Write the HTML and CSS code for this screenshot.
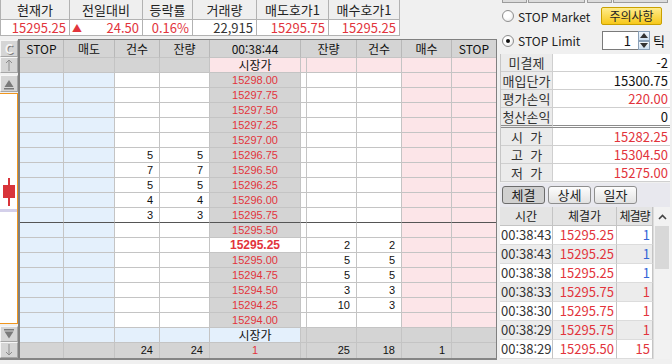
FILE: index.html
```html
<!DOCTYPE html>
<html lang="ko">
<head>
  <meta charset="UTF-8" />
  <meta name="viewport" content="width=device-width, initial-scale=1.0"/>
  <title>호가창</title>
  <link rel="stylesheet" href="styles.css">
</head>
<body>
  <div class="app">
    <div class="left">
      <div class="summary">
        <div class="sh">현재가</div>
        <div class="sh">전일대비</div>
        <div class="sh">등락률</div>
        <div class="sh">거래량</div>
        <div class="sh">매도호가1</div>
        <div class="sh">매수호가1</div>
        <div class="sv up">15295.25</div>
        <div class="sv up"><span class="tri">▲</span>24.50</div>
        <div class="sv up">0.16%</div>
        <div class="sv">22,915</div>
        <div class="sv up">15295.75</div>
        <div class="sv up">15295.25</div>
      </div>

      <div class="book">
        <div class="side">
          <div class="sbtn tall cbtn">C</div>
          <div class="sbtn">
            <svg width="16" height="14" viewBox="0 0 16 14"><path d="M8 2v11M5 5l3-3 3 3" fill="none" stroke="#8d8d8d" stroke-width="1"/></svg>
          </div>
          <div class="sbtn tall gap">
            <svg width="16" height="15" viewBox="0 0 16 15"><path d="M3.5 11L8 4l4.5 7z" fill="#7a7a7a"/><rect x="3" y="12" width="10" height="1.5" fill="#7a7a7a"/></svg>
          </div>
          <div class="chart">
            <svg width="17" height="229" viewBox="0 0 17 229">
              <rect x="8" y="84" width="2" height="28" fill="#d8343a"/>
              <rect x="3" y="91" width="12" height="13" fill="#d8343a"/>
              <rect x="0" y="115" width="17" height="3" fill="#d4d0ea"/>
            </svg>
          </div>
          <div class="sbtn">
            <svg width="16" height="14" viewBox="0 0 16 14"><rect x="3" y="2" width="10" height="1.5" fill="#7a7a7a"/><path d="M3.5 4.5L8 11.5l4.5-7z" fill="#7a7a7a"/></svg>
          </div>
          <div class="sbtn">
            <svg width="16" height="14" viewBox="0 0 16 14"><path d="M8 1v11M5 9l3 3 3-3" fill="none" stroke="#8d8d8d" stroke-width="1"/></svg>
          </div>
        </div>
        <div class="grid" id="grid"></div>
      </div>
    </div>

    <div class="right">
      <div class="rtop"><span class="t1"></span><span class="t2"></span><span class="t3"></span><span class="t4"></span></div>
      <div class="opts">
        <div class="opt">
          <span class="radio"></span>
          <span class="opt-label">STOP Market</span>
          <span class="warn">주의사항</span>
        </div>
        <div class="opt">
          <span class="radio on"></span>
          <span class="opt-label wide">STOP Limit</span>
          <span class="spin">
            <span class="spin-box">1</span>
            <span class="spin-btns">
              <span><svg width="8" height="5" viewBox="0 0 8 5"><path d="M0 5L4 0l4 5z" fill="#333"/></svg></span>
              <span><svg width="8" height="5" viewBox="0 0 8 5"><path d="M0 0l4 5 4-5z" fill="#333"/></svg></span>
            </span>
          </span>
          <span class="tick">틱</span>
        </div>
      </div>

      <div class="info">
        <div class="il">미결제</div><div class="iv">-2</div>
        <div class="il">매입단가</div><div class="iv">15300.75</div>
        <div class="il">평가손익</div><div class="iv up">220.00</div>
        <div class="il sep">청산손익</div><div class="iv sep">0</div>
        <div class="il">시&nbsp;&nbsp;가</div><div class="iv up">15282.25</div>
        <div class="il">고&nbsp;&nbsp;가</div><div class="iv up">15304.50</div>
        <div class="il">저&nbsp;&nbsp;가</div><div class="iv up">15275.00</div>
      </div>

      <div class="tabs">
        <span class="tab on">체결</span>
        <span class="tab">상세</span>
        <span class="tab">일자</span>
      </div>

      <div class="trade">
        <div class="tt">
          <div class="th">시간</div><div class="th">체결가</div><div class="th narrow">체결량</div>
          <div class="tm">00:38:43</div><div class="tp">15295.25</div><div class="tq dn">1</div>
          <div class="tm alt">00:38:43</div><div class="tp alt">15295.25</div><div class="tq alt dn">1</div>
          <div class="tm">00:38:38</div><div class="tp">15295.25</div><div class="tq dn">1</div>
          <div class="tm alt">00:38:33</div><div class="tp alt">15295.75</div><div class="tq alt">1</div>
          <div class="tm">00:38:30</div><div class="tp">15295.75</div><div class="tq">1</div>
          <div class="tm alt">00:38:29</div><div class="tp alt">15295.75</div><div class="tq alt">1</div>
          <div class="tm">00:38:29</div><div class="tp">15295.50</div><div class="tq">15</div>
        </div>
        <div class="scroll">
          <div class="sc-up"><svg width="9" height="6" viewBox="0 0 9 6"><path d="M1 5l3.5-3.5L8 5" fill="none" stroke="#444" stroke-width="1.6"/></svg></div>
          <div class="sc-thumb"></div>
        </div>
      </div>
    </div>
  </div>

  <script>
    const grid = document.getElementById('grid');

    function cell(text, cls) {
      const d = document.createElement('div');
      d.className = cls;
      d.textContent = text;
      grid.appendChild(d);
    }

    function row(cells, extra) {
      cells.forEach((c, i) => {
        let cls = c[1];
        if (i === cells.length - 1) cls += ' end';
        if (extra) cls += ' ' + extra;
        cell(c[0], cls);
      });
    }

    row([['STOP','hd'],['매도','hd'],['건수','hd'],['잔량','hd'],['00:38:44','hd'],['잔량','hd span2'],['건수','hd'],['매수','hd'],['STOP','hd']]);
    row([['','g'],['','g'],['','g'],['','g'],['시장가','p c ko'],['','p'],['','p'],['','p'],['','p'],['','p']]);

    const asks = [
      ['15298.00'], ['15297.75'], ['15297.50'], ['15297.25'], ['15297.00'],
      ['15296.75', 5, 5], ['15296.50', 7, 7], ['15296.25', 5, 5], ['15296.00', 4, 4], ['15295.75', 3, 3]
    ];
    asks.forEach((a, i) => {
      row([['','b'],['','b'],[a[1] || '','w n'],[a[2] || '','w n'],[a[0],'g c r'],['','w'],['','w'],['','w'],['','p'],['','p']],
        i === asks.length - 1 ? 'dk' : '');
    });

    const bids = [
      ['15295.50'], ['15295.25', 2, 2, true], ['15295.00', 5, 5], ['15294.75', 5, 5],
      ['15294.50', 3, 3], ['15294.25', 10, 3], ['15294.00']
    ];
    bids.forEach(b => {
      row([['','b'],['','b'],['','w'],['','w'],[b[0], b[3] ? 'w c r k' : 'g c r'],['','w'],[b[1] || '','w n'],[b[2] || '','w n'],['','p'],['','p']]);
    });

    row([['','b'],['','b'],['','b'],['','b'],['시장가','b c ko'],['','g'],['','g'],['','g'],['','g'],['','g']]);
    row([['','g'],['','g'],['24','g n'],['24','g n'],['1','g c r'],['','g'],['25','g n'],['18','g n'],['1','g n'],['','g']], 'bot');
  </script>
</body>
</html>
```

FILE: styles.css
```css
body {
  margin: 0;
  width: 672px;
  height: 364px;
  overflow: hidden;
  background-color: #f0f0f0;
  font-family: "Noto Sans CJK KR", "Noto Sans", sans-serif;
  font-size: 12px;
  color: #111;
}
.app {
  display: flex;
}
.left {
  width: 497px;
}

/* summary strip */
.summary {
  display: grid;
  grid-template-columns: 69px 73px 50px 64px 72px 71px;
  grid-template-rows: 20px 16px;
  width: 400px;
  border-left: 1px solid #b2b2b2;
  box-sizing: border-box;
}
.summary div {
  box-sizing: border-box;
  border-right: 1px solid #b2b2b2;
  border-bottom: 1px solid #b2b2b2;
  white-space: nowrap;
}
.sh {
  background-color: #efefef;
  text-align: center;
  font-size: 13px;
  line-height: 19px;
  color: #222;
}
.sv {
  background-color: #fff;
  text-align: right;
  padding-right: 3px;
  font-size: 13px;
  line-height: 15px;
  color: #333;
}
.sv.up {
  color: #e2343c;
}
.sv .tri {
  float: left;
  padding-left: 2px;
  font-size: 10px;
}

/* order book */
.book {
  display: flex;
  margin-top: 3px;
  border-bottom: 2px solid #858585;
}
.side {
  width: 18px;
  padding-top: 1px;
  display: flex;
  flex-direction: column;
}
.sbtn {
  height: 16px;
  box-sizing: border-box;
  background-color: #d5d5d5;
  border-top: 1px solid #f6f6f6;
  border-left: 1px solid #f6f6f6;
  border-right: 1px solid #a6a6a6;
  border-bottom: 1px solid #a6a6a6;
  display: flex;
  align-items: center;
  justify-content: center;
}
.sbtn.tall {
  height: 17px;
}
.sbtn.gap {
  margin-top: 2px;
}
.cbtn {
  font-weight: bold;
  font-size: 13px;
  line-height: 15px;
  color: #f4f4f4;
  text-shadow: 1px 1px 0 #7c7c7c;
}
.chart {
  height: 231px;
  margin: 1px 0 2px;
  box-sizing: border-box;
  background-color: #fff;
  border: 1px solid #f0961e;
  border-left: none;
}
.chart svg {
  display: block;
}

.grid {
  display: grid;
  grid-template-columns: 44px 51px 45px 50px 91px 6px 50px 45px 50px 44px;
  grid-template-rows: 18px;
  grid-auto-rows: 15px;
  width: 476px;
  border-top: 1px solid #808080;
  border-left: 2px solid #808080;
  border-right: 1px solid #808080;
  font-family: "Liberation Sans", "Noto Sans CJK KR", sans-serif;
  font-size: 11px;
}
.grid div {
  box-sizing: border-box;
  border-right: 1px solid #c4c4c4;
  border-bottom: 1px solid #c4c4c4;
  line-height: 14px;
  white-space: nowrap;
}
.grid .hd {
  background-color: #d4d4d4;
  text-align: center;
  font-family: "Noto Sans CJK KR", sans-serif;
  font-size: 12px;
  line-height: 17px;
  border-right-color: #b8b8b8;
}
.grid .ko {
  font-family: "Noto Sans CJK KR", sans-serif;
  font-size: 12px;
}
.grid .span2 {
  grid-column: span 2;
}
.grid .end {
  border-right: none;
}
.grid .bot {
  border-bottom: none;
}
.grid .dk {
  border-bottom-color: #555;
}
.grid .g { background-color: #d4d4d4; }
.grid .b { background-color: #e4f0fc; }
.grid .w { background-color: #fff; }
.grid .p { background-color: #fce5e8; }
.grid .n {
  text-align: right;
  padding-right: 6px;
}
.grid .c { text-align: center; }
.grid .r { color: #e2343c; }
.grid .k {
  font-weight: bold;
  font-size: 12px;
}

/* right panel */
.right {
  width: 175px;
  padding-left: 3px;
  box-sizing: border-box;
}
.rtop {
  display: flex;
  height: 3px;
}
.rtop span {
  box-sizing: border-box;
  background-color: #dcdcdc;
  border: 1px solid #9c9c9c;
  border-top: none;
}
.rtop .t1 { width: 25px; margin-left: 2px; }
.rtop .t2 { width: 57px; margin-left: 1px; }
.rtop .t3 { width: 25px; margin-left: 2px; }
.rtop .t4 { width: 55px; margin-left: 1px; }
.opts {
  height: 51px;
  padding-top: 4px;
  box-sizing: border-box;
}
.opt {
  display: flex;
  align-items: center;
  height: 18px;
}
.opt + .opt {
  margin-top: 6px;
  height: 19px;
}
.radio {
  width: 12px;
  height: 12px;
  margin-left: 2px;
  box-sizing: border-box;
  border: 1px solid #8e8e8e;
  border-radius: 50%;
  background: radial-gradient(circle at 40% 40%, #fff 35%, #e0e0e0);
  display: flex;
  align-items: center;
  justify-content: center;
}
.radio.on::after {
  content: '';
  width: 4px;
  height: 4px;
  border-radius: 50%;
  background-color: #111;
}
.opt-label {
  margin-left: 4px;
  width: 83px;
  color: #222;
}
.opt-label.wide {
  width: 84px;
}
.warn {
  width: 61px;
  height: 18px;
  box-sizing: border-box;
  border: 1px solid #c9a000;
  border-radius: 2px;
  background: linear-gradient(#ffec8c, #f7c81a);
  text-align: center;
  line-height: 16px;
  color: #222;
}
.spin {
  display: flex;
  height: 19px;
}
.spin-box {
  width: 36px;
  box-sizing: border-box;
  border: 1px solid #7a7a7a;
  border-right: none;
  background-color: #fff;
  text-align: right;
  padding-right: 7px;
  font-size: 13px;
  line-height: 17px;
}
.spin-btns {
  width: 12px;
  display: flex;
  flex-direction: column;
}
.spin-btns span {
  flex: 1;
  box-sizing: border-box;
  border: 1px solid #8aa0b8;
  background: linear-gradient(#f2f7fc, #cde0f2);
  display: flex;
  align-items: center;
  justify-content: center;
}
.tick {
  margin-left: 3px;
  font-size: 13px;
}

.info {
  display: grid;
  grid-template-columns: 52px 117px;
  grid-template-rows: 18px 18px 18px 20px 18px 18px 18px;
  width: 170px;
  border-left: 1px solid #c6c6c6;
  font-size: 13px;
}
.info div {
  box-sizing: border-box;
  border-bottom: 1px solid #cfcfcf;
  line-height: 17px;
  white-space: nowrap;
}
.info .il {
  background-color: #ebebeb;
  text-align: center;
  border-right: 1px solid #cfcfcf;
  color: #333;
}
.info .iv {
  background-color: #fff;
  text-align: right;
  padding-right: 2px;
}
.info .iv.up {
  color: #e2343c;
}
.info .sep {
  border-bottom: 3px double #8c8c8c;
}

.tabs {
  display: flex;
  gap: 3px;
  width: 170px;
  height: 24px;
  margin-top: 1px;
  padding: 3px 0 0 2px;
  box-sizing: border-box;
  background-color: #e8e8ee;
}
.tab {
  width: 43px;
  height: 18px;
  box-sizing: border-box;
  border: 1px solid #8e8e8e;
  border-radius: 3px;
  background: linear-gradient(#fdfdfd, #e2e2e2);
  text-align: center;
  line-height: 16px;
  font-size: 13px;
  color: #222;
}
.tab.on {
  background: #d0d0d0;
  border-color: #6c6c6c;
}

.trade {
  display: flex;
  width: 170px;
}
.tt {
  display: grid;
  grid-template-columns: 53px 64px 36px;
  grid-auto-rows: 19px;
  width: 153px;
  font-size: 13px;
}
.tt div {
  box-sizing: border-box;
  border-right: 1px solid #c4c4c4;
  border-bottom: 1px solid #dcdcdc;
  line-height: 18px;
  white-space: nowrap;
  background-color: #fff;
}
.tt .th {
  background-color: #e4e4e4;
  text-align: center;
  font-size: 12px;
  color: #222;
  border-bottom-color: #c4c4c4;
}
.tt .narrow {
  letter-spacing: -1px;
}
.tt .tm {
  padding-left: 1px;
  color: #333;
}
.tt .tp {
  text-align: right;
  padding-right: 2px;
  color: #e2343c;
}
.tt .tq {
  text-align: right;
  padding-right: 2px;
  color: #e2343c;
}
.tt .dn {
  color: #3565d6;
}
.tt .alt {
  background-color: #ececec;
}
.scroll {
  width: 17px;
  height: 152px;
  background-color: #f2f2f2;
  border-left: 1px solid #dcdcdc;
  box-sizing: border-box;
}
.sc-up {
  height: 19px;
  display: flex;
  align-items: center;
  justify-content: center;
}
.sc-thumb {
  height: 43px;
  margin: 0 1px;
  background-color: #d8d8d8;
}
```
